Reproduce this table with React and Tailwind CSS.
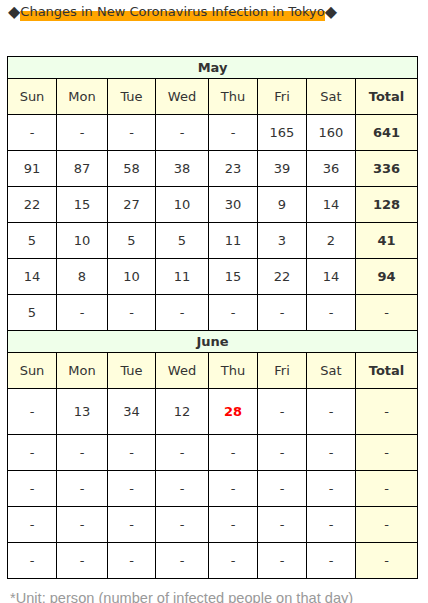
import React from 'react';

const days = ['Sun', 'Mon', 'Tue', 'Wed', 'Thu', 'Fri', 'Sat'];
const widths = ['w-[49px]', 'w-[51px]', 'w-[48px]', 'w-[53px]', 'w-[49px]', 'w-[49px]', 'w-[49px]', 'w-[62px]'];

// each row: seven days then the weekly total
const mayRows = [
  ['-', '-', '-', '-', '-', '165', '160', '641'],
  ['91', '87', '58', '38', '23', '39', '36', '336'],
  ['22', '15', '27', '10', '30', '9', '14', '128'],
  ['5', '10', '5', '5', '11', '3', '2', '41'],
  ['14', '8', '10', '11', '15', '22', '14', '94'],
  ['5', '-', '-', '-', '-', '-', '-', '-'],
];

const juneRows = [
  ['-', '13', '34', '12', '28', '-', '-', '-'],
  ['-', '-', '-', '-', '-', '-', '-', '-'],
  ['-', '-', '-', '-', '-', '-', '-', '-'],
  ['-', '-', '-', '-', '-', '-', '-', '-'],
  ['-', '-', '-', '-', '-', '-', '-', '-'],
];

const MonthHead = ({ name }) => (
  <>
    <tr className="h-[22px] bg-[#efffea]">
      <th colSpan={8} className="border border-black font-bold text-[13px] p-0">{name}</th>
    </tr>
    <tr className="h-[36px] bg-[#fffedd]">
      {days.map((d) => (
        <th key={d} className="border border-black font-normal p-0">{d}</th>
      ))}
      <th className="border border-black font-bold p-0">Total</th>
    </tr>
  </>
);

const Row = ({ cells, tall, redIndex }) => (
  <tr className={tall ? 'h-[46px]' : 'h-[36px]'}>
    {cells.map((c, i) => {
      const isTotal = i === 7;
      const isRed = i === redIndex;
      const bold = (isTotal && c !== '-') || isRed;
      return (
        <td
          key={i}
          className={`border border-black p-0 text-center ${isTotal ? 'bg-[#fffedd]' : 'bg-white'} ${bold ? 'font-bold' : ''} ${isRed ? 'text-[#ff0000]' : ''}`}
        >
          {c}
        </td>
      );
    })}
  </tr>
);

export default function App() {
  return (
    <div className="min-h-screen bg-white text-[#333] font-['DejaVu_Sans','Liberation_Sans',sans-serif] text-[13px]">
      <div className="pl-[8px] pt-[3px] flex items-center text-[13px] leading-[18px]">
        <span className="text-[#333] text-[16px] leading-[18px]">◆</span>
        <span className="bg-[linear-gradient(transparent_45%,#ffa500_45%)]">Changes in New Coronavirus Infection in Tokyo</span>
        <span className="text-[#333] text-[16px] leading-[18px]">◆</span>
      </div>

      <table className="ml-[7px] mt-[35px] border-collapse table-fixed w-[411px] text-center">
        <colgroup>
          {widths.map((w, i) => (
            <col key={i} className={w} />
          ))}
        </colgroup>
        <tbody>
          <MonthHead name="May" />
          {mayRows.map((r, i) => (
            <Row key={i} cells={r} />
          ))}
          <MonthHead name="June" />
          {juneRows.map((r, i) => (
            <Row key={i} cells={r} tall={i === 0} redIndex={i === 0 ? 4 : -1} />
          ))}
        </tbody>
      </table>

      <p className="ml-[10px] mt-[10px] text-[14.6px] leading-[18px] text-[#999] font-['Liberation_Sans',sans-serif] whitespace-nowrap">*Unit: person (number of infected people on that day)</p>
    </div>
  );
}
